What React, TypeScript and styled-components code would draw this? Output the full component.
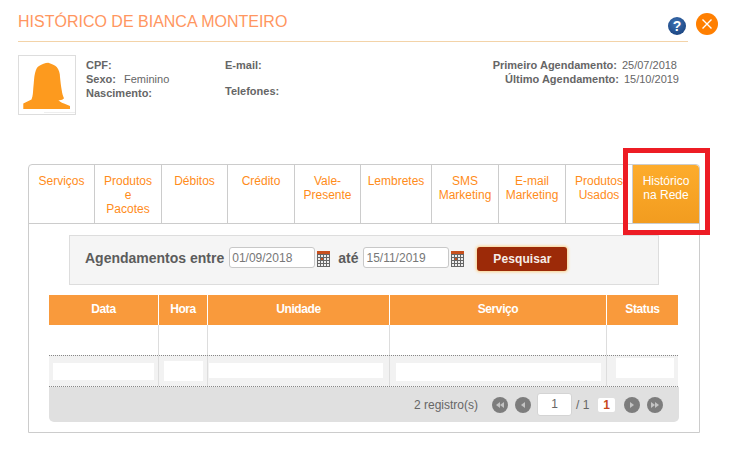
import React from "react";
import styled, { createGlobalStyle } from "styled-components";

const GlobalStyle = createGlobalStyle`
  html, body {
    margin: 0;
    padding: 0;
    background: #fff;
    font-family: "Liberation Sans", Arial, sans-serif;
    color: #666;
  }
  * {
    box-sizing: border-box;
  }
`;

const Page = styled.div`
  position: relative;
  width: 744px;
  height: 466px;
  padding-left: 18px;
  overflow: hidden;
`;

const Header = styled.div`
  display: flex;
  align-items: center;
  justify-content: space-between;
  width: 670px;
  height: 42px;
  border-bottom: 1px solid #f3d3a8;
  padding-top: 2px;
`;

const Title = styled.h1`
  margin: 0;
  font-size: 16px;
  font-weight: normal;
  color: #ff9660;
`;

const HelpIcon = styled.div`
  width: 18px;
  height: 18px;
  margin: 8px 2px 0 0;
  border-radius: 50%;
  background: radial-gradient(circle at 45% 35%, #3f74b5, #1c4683 75%);
  color: #fff;
  font-size: 14px;
  font-weight: bold;
  line-height: 18px;
  text-align: center;
`;

const CloseButton = styled.div`
  position: absolute;
  left: 696px;
  top: 13px;
  width: 22px;
  height: 22px;
  border-radius: 50%;
  background: #ff7f00;
  display: flex;
  align-items: center;
  justify-content: center;
`;

const Client = styled.div`
  display: flex;
  width: 661px;
  margin-top: 13px;
  height: 109px;
`;

const Photo = styled.div`
  width: 58px;
  height: 60px;
  border: 1px solid #ddd;
  display: flex;
  margin-right: 10px;
`;

const InfoColumn = styled.div<{ $width: number }>`
  width: ${(p) => p.$width}px;
  padding-top: 3px;
  font-size: 11px;
  line-height: 14px;
`;

const InfoRow = styled.div<{ $gap?: number; $right?: number }>`
  height: 14px;
  margin-bottom: ${(p) => p.$gap ?? 0}px;
  margin-right: ${(p) => p.$right ?? 0}px;
  white-space: nowrap;
`;

const Label = styled.b`
  margin-right: 5px;
`;

const DatesColumn = styled(InfoColumn)`
  flex: 1;
  text-align: right;
`;

const Panel = styled.div`
  width: 672px;
  height: 269px;
  margin-left: 10px;
  border: 1px solid #ccc;
  border-top-left-radius: 4px;
  border-top-right-radius: 4px;
`;

const Tabs = styled.div`
  display: flex;
  height: 59px;
  border-bottom: 1px solid #ccc;
`;

const Tab = styled.div<{ $width: number; $active?: boolean }>`
  width: ${(p) => p.$width}px;
  height: 59px;
  padding-top: 9px;
  font-size: 12px;
  line-height: 14px;
  text-align: center;
  color: ${(p) => (p.$active ? "#fff" : "#ff8c1a")};
  border-right: ${(p) => (p.$active ? "0" : "1px solid #ccc")};
  white-space: nowrap;
  ${(p) =>
    p.$active &&
    `
    margin-left: -1px;
    border-left: 1px solid #ccc;
    border-bottom: 1px solid #ccc;
    border-top-right-radius: 4px;
    background: linear-gradient(#fdac2c, #f29c1f);
  `}
`;

const Filter = styled.div`
  display: flex;
  align-items: center;
  width: 590px;
  height: 50px;
  margin: 11px 0 10px 40px;
  padding: 0 0 5px 15px;
  border: 1px solid #ddd;
  background: #f5f5f5;
`;

const FilterLabel = styled.span<{ $left?: number }>`
  margin: 0 5px 0 ${(p) => p.$left ?? 0}px;
  font-size: 14px;
  font-weight: bold;
  color: #5c5c5c;
  white-space: nowrap;
`;

const DateInput = styled.div`
  width: 86px;
  height: 21px;
  padding: 0 2px;
  border: 1px solid #c8c8c8;
  border-radius: 3px;
  background: #fff;
  font-size: 12px;
  line-height: 20px;
  color: #777;
`;

const CalendarIcon = styled.svg`
  display: block;
  margin: 2px 0 0 2px;
  flex: none;
`;

const SearchButton = styled.div`
  width: 90px;
  height: 24px;
  margin: 3px 0 0 13px;
  border-radius: 3px;
  background: #9c2a08;
  box-shadow: 0 0 3px 1px #fbd28c;
  color: #f6ede8;
  font-size: 12px;
  font-weight: bold;
  line-height: 24px;
  letter-spacing: 0.1px;
  text-align: center;
`;

const Table = styled.div`
  width: 630px;
  margin-left: 20px;
`;

const columns = "110px 49px 182px 217px 71px";

const HeaderRow = styled.div`
  display: grid;
  grid-template-columns: ${columns};
  width: 629px;
  height: 30px;
  background: #f99a3c;
`;

const HeaderCell = styled.div<{ $last?: boolean }>`
  border-right: ${(p) => (p.$last ? "0" : "1px solid #fff")};
  color: #fff;
  font-size: 12px;
  font-weight: bold;
  letter-spacing: -0.4px;
  line-height: 29px;
  text-align: center;
`;

const Row = styled.div<{ $striped?: boolean }>`
  display: grid;
  grid-template-columns: ${columns};
  width: 629px;
  height: ${(p) => (p.$striped ? 32 : 30)}px;
  background: ${(p) => (p.$striped ? "#f2f2f2" : "#fff")};
  ${(p) =>
    p.$striped &&
    `
    border-top: 1px dotted #888;
    border-bottom: 1px dotted #888;
  `}
`;

const Cell = styled.div<{ $last?: boolean }>`
  border-right: ${(p) => (p.$last ? "0" : "1px solid #ddd")};
`;

// blocos brancos onde o dado foi apagado
const Blank = styled.div<{ $top: number; $left: number; $width: number; $height: number }>`
  width: ${(p) => p.$width}px;
  height: ${(p) => p.$height}px;
  margin: ${(p) => p.$top}px 0 0 ${(p) => p.$left}px;
  background: #fff;
`;

const Pager = styled.div`
  display: flex;
  align-items: center;
  width: 630px;
  height: 35px;
  padding-left: 365px;
  border-radius: 0 0 5px 5px;
  background: #e0e0e0;
  font-size: 12px;
  color: #666;
`;

const Records = styled.span`
  width: 78px;
  white-space: nowrap;
`;

const PageButton = styled.div<{ $gap: number }>`
  display: flex;
  align-items: center;
  justify-content: center;
  width: 16px;
  height: 16px;
  margin-right: ${(p) => p.$gap}px;
  border-radius: 50%;
  background: #7d7d7d;
`;

const PageInput = styled.div`
  width: 35px;
  height: 23px;
  border: 1px solid #d4d4d4;
  border-radius: 3px;
  background: #fff;
  line-height: 21px;
  text-align: center;
`;

const PageTotal = styled.span`
  width: 26px;
  padding-left: 4px;
  white-space: nowrap;
`;

const CurrentPage = styled.div`
  width: 17px;
  height: 14px;
  margin-right: 9px;
  border-radius: 2px;
  background: #fff;
  color: #c8481a;
  font-weight: bold;
  line-height: 14px;
  text-align: center;
`;

const Highlight = styled.div`
  position: absolute;
  left: 623px;
  top: 148px;
  width: 87px;
  height: 87px;
  border: 5px solid #ed1c24;
`;

const tabs: { label: React.ReactNode; width: number; active?: boolean }[] = [
  { label: "Serviços", width: 66 },
  { label: <>Produtos<br />e<br />Pacotes</>, width: 67 },
  { label: "Débitos", width: 66 },
  { label: "Crédito", width: 67 },
  { label: <>Vale-<br />Presente</>, width: 66 },
  { label: "Lembretes", width: 71 },
  { label: <>SMS<br />Marketing</>, width: 67 },
  { label: <>E-mail<br />Marketing</>, width: 67 },
  { label: <>Produtos<br />Usados</>, width: 67 },
  { label: <>Histórico<br />na Rede</>, width: 67, active: true },
];

const headers = ["Data", "Hora", "Unidade", "Serviço", "Status"];

const blanks = [
  { top: 7, left: 4, width: 101, height: 17 },
  { top: 5, left: 5, width: 39, height: 20 },
  { top: 7, left: 1, width: 174, height: 15 },
  { top: 7, left: 6, width: 205, height: 18 },
  { top: 2, left: 9, width: 58, height: 20 },
];

const Calendar = () => (
  <CalendarIcon width="13" height="16" viewBox="0 0 13 16">
    <rect width="13" height="3" fill="#c8501e" />
    <rect y="3" width="13" height="13" fill="#666" />
    {[0, 1, 2, 3].map((r) =>
      [0, 1, 2, 3].map((c) => (
        <rect
          key={`${r}-${c}`}
          x={1 + c * 3}
          y={4 + r * 3}
          width="2"
          height="2"
          fill={r === 1 && c === 1 ? "#c8501e" : "#eee"}
        />
      ))
    )}
  </CalendarIcon>
);

const Arrows = ({ left, double }: { left?: boolean; double?: boolean }) => (
  <svg width="10" height="8" viewBox="0 0 10 8">
    <g fill="#c4c4c4" transform={left ? "" : "translate(10 0) scale(-1 1)"}>
      {double ? (
        <>
          <path d="M1 4 L5 1 V7 Z" />
          <path d="M5 4 L9 1 V7 Z" />
        </>
      ) : (
        <path d="M3 4 L7 1 V7 Z" />
      )}
    </g>
  </svg>
);

const App = () => (
  <Page>
    <GlobalStyle />
    <Header>
      <Title>HISTÓRICO DE BIANCA MONTEIRO</Title>
      <HelpIcon>?</HelpIcon>
    </Header>
    <CloseButton>
      <svg width="12" height="12" viewBox="0 0 12 12">
        <path d="M1.5 1.5 L10.5 10.5 M10.5 1.5 L1.5 10.5" stroke="#fff" strokeWidth="1.4" />
      </svg>
    </CloseButton>

    <Client>
      <Photo>
        <svg width="56" height="58" viewBox="0 0 56 58">
          <path
            fill="#fd9a1e"
            d="M4.3 53 V47.5 L12.5 43.5 C14 40 14 36 14.3 32 C15 26 15 21 16 17.3 C17 13 18 11 20 10 C23 8 26 7 29.3 6.7 C33 8 36 9 37.7 11 C40 14 41 17 41 21 C41.5 26 42 30 42.7 34 C43 37 44 40 45 42.3 C44 44 41 44.5 39.3 44 C41 46 43 47 45 47.5 L51 50 V53 Z"
          />
          <rect x="25" y="56" width="31" height="1" fill="#eee" />
        </svg>
      </Photo>
      <InfoColumn $width={139}>
        <InfoRow><Label>CPF:</Label></InfoRow>
        <InfoRow><Label>Sexo:</Label> Feminino</InfoRow>
        <InfoRow><Label>Nascimento:</Label></InfoRow>
      </InfoColumn>
      <InfoColumn $width={150}>
        <InfoRow $gap={12}><Label>E-mail:</Label></InfoRow>
        <InfoRow><Label>Telefones:</Label></InfoRow>
      </InfoColumn>
      <DatesColumn $width={0}>
        <InfoRow $right={2}><Label>Primeiro Agendamento:</Label>25/07/2018</InfoRow>
        <InfoRow><Label>Último Agendamento:</Label>15/10/2019</InfoRow>
      </DatesColumn>
    </Client>

    <Panel>
      <Tabs>
        {tabs.map((t, i) => (
          <Tab key={i} $width={t.width} $active={t.active}>
            {t.label}
          </Tab>
        ))}
      </Tabs>

      <Filter>
        <FilterLabel>Agendamentos entre</FilterLabel>
        <DateInput>01/09/2018</DateInput>
        <Calendar />
        <FilterLabel $left={8}>até</FilterLabel>
        <DateInput>15/11/2019</DateInput>
        <Calendar />
        <SearchButton>Pesquisar</SearchButton>
      </Filter>

      <Table>
        <HeaderRow>
          {headers.map((h, i) => (
            <HeaderCell key={h} $last={i === headers.length - 1}>
              {h}
            </HeaderCell>
          ))}
        </HeaderRow>
        <Row>
          {headers.map((h, i) => (
            <Cell key={h} $last={i === headers.length - 1} />
          ))}
        </Row>
        <Row $striped>
          {blanks.map((b, i) => (
            <Cell key={i} $last={i === blanks.length - 1}>
              <Blank $top={b.top} $left={b.left} $width={b.width} $height={b.height} />
            </Cell>
          ))}
        </Row>
        <Pager>
          <Records>2 registro(s)</Records>
          <PageButton $gap={7}><Arrows left double /></PageButton>
          <PageButton $gap={6}><Arrows left /></PageButton>
          <PageInput>1</PageInput>
          <PageTotal>/ 1</PageTotal>
          <CurrentPage>1</CurrentPage>
          <PageButton $gap={7}><Arrows /></PageButton>
          <PageButton $gap={0}><Arrows double /></PageButton>
        </Pager>
      </Table>
    </Panel>

    <Highlight />
  </Page>
);

export default App;
